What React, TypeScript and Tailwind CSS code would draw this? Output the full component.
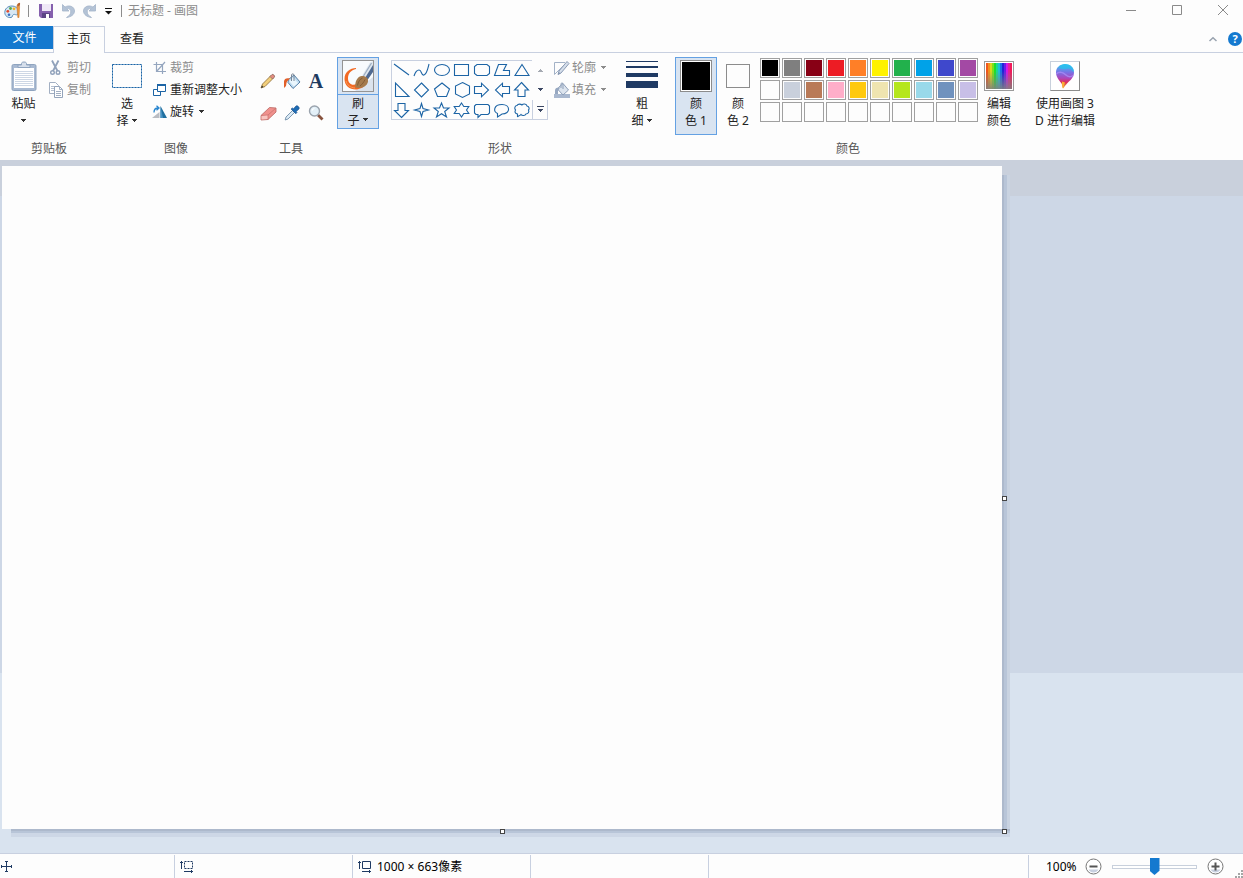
import React from 'react';
import clsx from 'clsx';

type IconProps = { children: React.ReactNode; w?: number; h?: number; className?: string };

function Icon({ children, w = 16, h = 16, className }: IconProps) {
  return (
    <svg
      width={w}
      height={h}
      viewBox={`0 0 ${w} ${h}`}
      fill="none"
      aria-hidden="true"
      className={clsx('shrink-0', className)}
    >
      {children}
    </svg>
  );
}

function Caret({ className = 'text-[#333]' }: { className?: string }) {
  return (
    <Icon w={7} h={4} className={className}>
      <path d="M1 0h5v1H5v1H4v1H3V2H2V1H1z" fill="currentColor" />
    </Icon>
  );
}

function PaletteIcon() {
  return (
    <Icon w={18} h={18}>
      <path d="M8 4C3.500 4 .8 7 .8 10.500.8 14 4 16 7 15.500c2-.3 1-2.300 2.500-3 1.500-.6 2.500 1 4 0 1.500-1 1.500-8.500-5.500-8.500z" fill="#d7e8f5" stroke="#5b8fb9" />
      <circle cx="3.800" cy="9.300" r="1.400" fill="#e04a2f" />
      <circle cx="6.500" cy="6.500" r="1.400" fill="#58a846" />
      <circle cx="10" cy="6.800" r="1.400" fill="#f0b429" />
      <circle cx="5" cy="12.800" r="1.300" fill="#3a6fc4" />
      <path d="M12.800 3.500C13 2 14.500 1 16 .8c.2 1.500 0 3-.8 3.900z" fill="#b5622c" />
      <path d="M12.800 3.800l2.800.8L15 15.500h-1.200z" fill="#f19a3c" stroke="#c0702c" strokeWidth=".5" />
    </Icon>
  );
}

function SaveIcon() {
  return (
    <Icon>
      <path d="M1 1h14v14H3l-2-2z" fill="#8560ad" />
      <path d="M4 1h9v7H4z" fill="#efe8f6" />
      <path d="M4 10h8v5H4z" fill="#5c4585" />
      <path d="M8 11h3v4H8z" fill="#fff" />
    </Icon>
  );
}

function UndoIcon({ flip = false }: { flip?: boolean }) {
  return (
    <Icon className={clsx(flip && '-scale-x-100')}>
      <path d="M2.500 1.500v6.500H9L6.800 5.800C9 5 11 6.500 10.800 9c-.1 2-1.600 4-4.300 5.500C11 14 14.500 11.500 14.500 8 14.500 3.500 9 1.500 5 4.100z" fill="#b4c3d6" stroke="#a3b4c9" strokeWidth=".8" />
    </Icon>
  );
}

function ClipboardIcon() {
  return (
    <Icon w={26} h={31}>
      <rect x="1" y="3.500" width="24" height="26" rx="1.500" fill="#a9bad2" stroke="#8fa4bf" />
      <path d="M3 7h20v20H3z" fill="#fff" />
      <path d="M4 10.500h18M4 12.500h18M4 14.500h18M4 16.500h18M4 18.500h18M4 20.500h18M4 22.500h18M4 24.500h18" stroke="#cdd7e5" />
      <path d="M7 6.500V4h3.500V2.500c0-1 1-1.500 2.500-1.500s2.500.5 2.500 1.500V4H19v2.500z" fill="#d6dfeb" stroke="#8fa4bf" />
    </Icon>
  );
}

function CutIcon() {
  return (
    <Icon>
      <path d="M3 0.500L8.500 11M9.500 .5L4 11" stroke="#91a2bb" strokeWidth="1.800" />
      <circle cx="3.500" cy="12.500" r="1.800" stroke="#91a2bb" strokeWidth="1.400" />
      <circle cx="9" cy="12.500" r="1.800" stroke="#91a2bb" strokeWidth="1.400" />
    </Icon>
  );
}

function CopyIcon() {
  return (
    <Icon>
      <path d="M.5.5h6l3 3v8h-9z" fill="#fff" stroke="#a2afc2" />
      <path d="M2 4.500h4M2 6.500h4M2 8.500h4" stroke="#b5c0d0" />
      <path d="M5.500 4.500h5l3 3v8h-8z" fill="#fff" stroke="#94a4bb" />
      <path d="M10.500 4.500v3h3M7 9.500h5M7 11.500h5M7 13.500h5" stroke="#a2afc2" />
    </Icon>
  );
}

function CropIcon() {
  return (
    <Icon>
      <path d="M4.500 2v9.500H14M1.500 4.500h9V14M5 11l8-9" stroke="#95a6bf" strokeWidth="1.200" />
    </Icon>
  );
}

function ResizeIcon() {
  return (
    <Icon>
      <path d="M1.500 7.500h7v6h-7z" fill="#fff" stroke="#1c64a5" />
      <path d="M5.500 2.500h8v7h-8z" fill="#fff" stroke="#1c64a5" />
      <path d="M5 3h9" stroke="#1c64a5" strokeWidth="2" />
    </Icon>
  );
}

function RotateIcon() {
  return (
    <Icon>
      <path d="M0 14L7.500 8v6z" fill="#b9bcc2" />
      <path d="M8.500 14V2L15 14z" fill="#1f6f9f" />
      <path d="M8.500 14V2l2.500 12z" fill="#4a94c4" />
      <path d="M2 8.500C2 5.500 3.500 4 6 4M4.500 1.800L7 4 4.500 6.200" stroke="#2986cf" strokeWidth="1.300" />
    </Icon>
  );
}

function PencilIcon() {
  return (
    <Icon>
      <path d="M1 15l1.500-4L11 2.500 13.500 5 5 13.500z" fill="#f2cf7b" stroke="#8a6a32" strokeWidth=".8" />
      <path d="M10 3.500l2-2c1-.8 3.200 1.400 2.500 2.500l-2 2z" fill="#e58b82" stroke="#8b6b60" strokeWidth=".8" />
      <path d="M1 15l1-2.500L3.500 14z" fill="#333" />
    </Icon>
  );
}

function BucketIcon() {
  return (
    <Icon w={18} h={17}>
      <path d="M5.500 6.500L11 2l6 7-7 6.500-5-6z" fill="#bfdcf1" stroke="#557fa5" />
      <path d="M10 4.500l5 5.500-4 3.500-4.500-5z" fill="#eaf6fd" />
      <path d="M8.500 8V2c0-1.500 2.500-1.500 2.500 0v6" stroke="#7b8796" />
      <path d="M1 15V8.500C1 5.500 4 4.500 7 5.500L4.500 8c-1.300 1-1 3-1.500 5z" fill="#e2602a" />
    </Icon>
  );
}

function EraserIcon() {
  return (
    <Icon w={17} h={15}>
      <path d="M1 9.500L9.500 1.500l6.500.5v4L8 13.500 1 14z" fill="#f0918d" stroke="#b96460" strokeWidth=".8" />
      <path d="M1 9.500l7-.5L16 2M8 9v4.500" stroke="#c8726e" strokeWidth=".8" />
      <path d="M1.500 10l6-.4v3.500l-6 .4z" fill="#f8c5c0" />
    </Icon>
  );
}

function DropperIcon() {
  return (
    <Icon>
      <path d="M1.200 15l.8-3L8.500 5.500l2 2L4 14z" fill="#dbeaf5" stroke="#7290aa" strokeWidth=".9" />
      <path d="M7 4l1.500-1 1 .8L12 1c1.500-1 4 1.500 3 3l-2.800 2.500.8 1-1.200 1.300z" fill="#1f6db5" stroke="#184c85" strokeWidth=".6" />
    </Icon>
  );
}

function MagnifierIcon() {
  return (
    <Icon>
      <path d="M10 10l4.500 4.500" stroke="#87523d" strokeWidth="2.800" />
      <circle cx="6.500" cy="6" r="5" fill="#e3f0f8" stroke="#9aa3ad" strokeWidth="1.400" />
      <path d="M4 5.500c.4-1.300 1.300-1.900 2.500-2" stroke="#fff" strokeWidth="1.200" />
    </Icon>
  );
}

function BrushIcon() {
  return (
    <Icon w={30} h={30}>
      <path d="M0 0h30v30H0z" fill="#f8fbfd" />
      <path d="M12 30h18V16z" fill="#dbe3ed" />
      {/* paint stroke */}
      <path d="M13 7C7 7 1.500 11 1.500 18 1.500 25 7 29 14 28.500l6-2-6-4c-4 3-9 .5-9-5C5 12.500 8 9 13 8z" fill="#f26a24" />
      <path d="M3 20c1 4 4 6.500 9 7" stroke="#f99a5c" />
      {/* handle and bristles */}
      <path d="M18.500 15.500L27 1.500 30 0v9l-6 9z" fill="#dfe7ef" />
      <path d="M22 17L30 4v7l-5.500 8z" fill="#4f6a92" />
      <path d="M20.500 15L28.500 2" stroke="#9aabc0" strokeWidth="1.200" />
      <path d="M12.500 26.500c-1-4.500 1-10.500 6-11.500 4-.5 7 2 6.500 5.500-1 5-6.500 7.500-12.500 6z" fill="#a47a4c" />
      <path d="M14.500 24.500c.5-3.500 2.500-6.500 5-7.500M17 25c2-1.500 4-4 5-6.500" stroke="#7b5630" strokeWidth=".8" />
    </Icon>
  );
}

function OutlineIcon() {
  return (
    <Icon>
      <path d="M11 2.500H.5v12L10 5" stroke="#a3b2c7" />
      <path d="M4 14.500l1-3.500 8-9.500 2 2L7 13z" fill="#d5deea" stroke="#8a9bb5" />
      <path d="M4 14.500l.8-2.500L6.500 13.500z" fill="#7f92ae" />
    </Icon>
  );
}

function FillIcon() {
  return (
    <Icon>
      <path d="M0 12h16v4H0z" fill="#a9b8cf" />
      <path d="M4.500 5.500L9 1.500l5.500 6.500L9 13 3.500 7z" fill="#dce4ee" stroke="#8fa0b9" />
      <path d="M7 6V2c0-1.500 2-1.500 2 0v5" stroke="#8fa0b9" />
      <path d="M1 12V8.500C1 6 3 5 6 5.500L4 9v3z" fill="#97a8c1" />
    </Icon>
  );
}

function Paint3DIcon() {
  return (
    <Icon w={28} h={28}>
      <defs>
        <linearGradient id="drop" x1="0" y1="0" x2="0" y2="1">
          <stop offset="0" stopColor="#3cc4f0" />
          <stop offset=".35" stopColor="#7a70e4" />
          <stop offset=".58" stopColor="#b045b8" />
          <stop offset=".75" stopColor="#dd2f5c" />
          <stop offset="1" stopColor="#f9b233" />
        </linearGradient>
      </defs>
      <path d="M14 2c5 0 9 3.500 9 8.500 0 5-4 8-6.500 10.500-1.800 1.800-3 4-4.500 5.500-.8-1.500-.5-3.500-1.500-5C9 19 5 15.500 5 10.500 5 5.500 9 2 14 2z" fill="url(#drop)" />
      <path d="M14 2c5 0 9 3.500 9 8-2-.5-2.500-3-5-3.500S14 8 11 7c-1.500-.5-2.500-1-3.500-.5C9 3.500 11.500 2 14 2z" fill="#22c3ee" opacity=".7" />
      <path d="M5.300 12c3-3 7-1.500 9 .5s5 3 8 1" stroke="#a98cf5" strokeWidth="1.500" opacity=".8" />
      <path d="M11 19.500l3 1-2 6c-.8-1.500-.5-3-1-4z" fill="#f9b233" />
    </Icon>
  );
}

const spectrum = ['#f0561c', '#f2901c', '#d8d81c', '#7be01c', '#1ce02c', '#1cd890', '#1cc0d8', '#1c70e8', '#2222d8', '#6a1ce8', '#d018e8', '#e81c9a', '#f01a5a'];

function SpectrumIcon() {
  return (
    <Icon w={26} h={26}>
      <defs>
        <linearGradient id="fade" x1="0" y1="0" x2="0" y2="1">
          <stop offset=".3" stopColor="#808080" stopOpacity="0" />
          <stop offset="1" stopColor="#808080" stopOpacity=".9" />
        </linearGradient>
      </defs>
      {spectrum.map((color, i) => (
        <rect key={color} x={i * 2} y="0" width="2" height="26" fill={color} />
      ))}
      <path d="M0 0h26v26H0z" fill="url(#fade)" />
    </Icon>
  );
}

const shapes: { name: string; d: string }[] = [
  { name: '直线', d: 'M2 4l15 11' },
  { name: '曲线', d: 'M2 16c1-3 3-6 5-6 3 0 2 6 5 5 3-1 4-7 5-11' },
  { name: '椭圆形', d: 'M2.500 10a7.500 5.500 0 1 0 15 0a7.500 5.500 0 1 0-15 0z' },
  { name: '矩形', d: 'M2.500 4.500h14v11h-14z' },
  { name: '圆角矩形', d: 'M5 4.500h10l2.500 2v7l-2.500 2H5l-2.500-2v-7z' },
  { name: '多边形', d: 'M6.500 4.500h8l-3 6h6v5h-15z' },
  { name: '三角形', d: 'M10 4.500l7 11H3z' },
  { name: '直角三角形', d: 'M3.500 3v13.500H17z' },
  { name: '菱形', d: 'M9.500 3l7 7-7 7-7-7z' },
  { name: '五边形', d: 'M10 3l7.500 6-3 7.500h-9L2.500 9z' },
  { name: '六边形', d: 'M10.500 2.500l7 3.500v8l-7 3.500-7-3.500V6z' },
  { name: '右箭头', d: 'M2.500 6.500h7V3.200l7 6.800-7 6.800v-3.300h-7z' },
  { name: '左箭头', d: 'M17.500 6.500h-7V3.200L3.500 10l7 6.800v-3.300h7z' },
  { name: '上箭头', d: 'M9.500 2.500L16.500 10H13v6.500H6V10H2.500z' },
  { name: '下箭头', d: 'M9.500 17.500l7-7h-3.500v-7H6v7H2.500z' },
  { name: '四角星形', d: 'M9.500 3.500l1.500 5 5.500 1.500-5.500 1.500-1.500 5-1.500-5L2.500 10 8 8.500z' },
  { name: '五角星形', d: 'M9.500 3l2 5h5.500l-4.300 3.500 1.800 5.500-5-3.300-5 3.300 1.800-5.500L2 8h5.500z' },
  { name: '六角星形', d: 'M9.500 3l2.300 3.500h5L14.500 10l2.300 3.500h-5L9.500 17l-2.300-3.500h-5L4.500 10 2.200 6.500h5z' },
  { name: '圆角矩形标注', d: 'M4 4.500h12l1.500 1.500v7l-1.500 1.500H9L6 17.500v-3H4l-1.500-1.500V6z' },
  { name: '椭圆形标注', d: 'M5.500 13.500C1 11.500 1.500 4.500 10 4.500s9 9.500 0 9.500L5.500 17z' },
  { name: '云形标注', d: 'M5 5.500c1-2 4-1.500 5-.5 1-1.500 4.500-1.500 5 1 2.500.5 2.500 3 1.500 4 1 2-.5 4-2.500 4-1 2-4 2-5 .5-1 1.500-3 1-3.500 2.500V14c-2.500 0-3-2.500-2-4C2 8.500 3 5.500 5 5.500z' },
];

const palette: (string | null)[] = [
  '#000000', '#7f7f7f', '#880015', '#ed1c24', '#ff7f27', '#fff200', '#22b14c', '#00a2e8', '#3f48cc', '#a349a4',
  '#fdfdfd', '#c9d0dc', '#b97a57', '#ffaec9', '#ffc90e', '#efe4b0', '#b5e61d', '#99d9ea', '#7092be', '#c8bfe7',
  null, null, null, null, null, null, null, null, null, null,
];

function Group({ label, className, children }: { label: string; className?: string; children: React.ReactNode }) {
  return (
    <section className={clsx('flex flex-col', className)} aria-label={label}>
      <div className="flex h-20 items-start">{children}</div>
      <h2 className="text-center leading-6 text-[#555]">{label}</h2>
    </section>
  );
}

type BigButtonProps = { icon: React.ReactNode; line1: string; line2?: string; caret?: boolean; className?: string };

function BigButton({ icon, line1, line2, caret, className = 'w-[42px]' }: BigButtonProps) {
  return (
    <button type="button" className={clsx('flex shrink-0 flex-col items-center leading-[17px]', className)}>
      <span className="flex h-[38px] items-center justify-center">{icon}</span>
      <span className="whitespace-nowrap">{line1}</span>
      <span className="flex h-[17px] items-center gap-0.5 whitespace-nowrap">
        {line2}
        {caret && <Caret />}
      </span>
    </button>
  );
}

type SmallButtonProps = { icon: React.ReactNode; label: string; caret?: boolean; disabled?: boolean };

function SmallButton({ icon, label, caret, disabled }: SmallButtonProps) {
  return (
    <button
      type="button"
      disabled={disabled}
      className={clsx('flex h-[22px] items-center gap-0.5 whitespace-nowrap', disabled && 'text-[#8c8c8c]')}
    >
      {icon}
      {label}
      {caret && <Caret className={clsx('ml-0.5', disabled ? 'text-[#8c8c8c]' : 'text-[#333]')} />}
    </button>
  );
}

function TitleBar() {
  return (
    <header className="flex h-[26px] items-start justify-between">
      <div className="flex h-[22px] items-center pl-1">
        <PaletteIcon />
        <span className="ml-1.5 h-3 w-px bg-[#8c8c8c]" />
        <button type="button" aria-label="保存" className="ml-[9px]"><SaveIcon /></button>
        <button type="button" aria-label="撤消" className="ml-1.5"><UndoIcon /></button>
        <button type="button" aria-label="重做" className="ml-1.5"><UndoIcon flip /></button>
        <button type="button" aria-label="自定义快速访问工具栏" className="ml-1.5">
          <Icon w={9} h={8}>
            <path d="M1 1.500h7" stroke="#111" />
            <path d="M1 4h7L4.500 7.500z" fill="#111" />
          </Icon>
        </button>
        <span className="ml-2 h-3 w-px bg-[#8c8c8c]" />
        <h1 className="ml-1.5 text-[#8c8c8c]">无标题 - 画图</h1>
      </div>
      <div className="flex h-[21px] items-center gap-[34px] pr-[14px] text-[#8a8a8a]">
        <button type="button" aria-label="最小化">
          <Icon w={12} h={12}><path d="M1 5.500h10" stroke="currentColor" /></Icon>
        </button>
        <button type="button" aria-label="最大化">
          <Icon w={12} h={12}><path d="M1.500.5h9v9h-9z" stroke="currentColor" /></Icon>
        </button>
        <button type="button" aria-label="关闭">
          <Icon w={12} h={12}><path d="M1 0l10 10M11 0L1 10" stroke="currentColor" /></Icon>
        </button>
      </div>
    </header>
  );
}

function TabBar() {
  return (
    <nav className="flex h-[27px] items-start border-b border-[#c8d0e0] pr-px">
      <button type="button" className="h-[23px] w-[53px] bg-[#1479cf] pr-1 leading-[23px] text-white">文件</button>
      <button type="button" className="h-[27px] w-[52px] border-x border-t border-[#c8d0e0] bg-[#fdfdfd] pb-0.5">主页</button>
      <button type="button" className="h-[25px] w-[54px]">查看</button>
      <div className="ml-auto flex h-[26px] items-center gap-[10px]">
        <button type="button" aria-label="最小化功能区">
          <Icon w={10} h={6}><path d="M1.500 5L5 1.800 8.500 5" stroke="#98a2ae" strokeWidth="1.500" /></Icon>
        </button>
        <button type="button" aria-label="帮助" className="size-[14px] rounded-full bg-[#1479cf] text-[11px] leading-[14px] font-bold text-white">?</button>
      </div>
    </nav>
  );
}

function ShapeGallery() {
  return (
    <div className="mt-[3px] flex">
      <div className="grid grid-cols-7 border-y border-l border-[#c8d0e0]">
        {shapes.map((shape, i) => (
          <button key={shape.name} type="button" aria-label={shape.name} className={clsx('w-5', i < 7 || i > 13 ? 'h-[19px]' : 'h-5')}>
            <Icon w={20} h={20} className={clsx(i < 7 && '-mt-px')}>
              <path d={shape.d} stroke="#1c64a5" strokeWidth="1.100" />
            </Icon>
          </button>
        ))}
      </div>
      <div className="flex w-4 flex-col">
        <button type="button" aria-label="上一行" className="flex h-5 items-center justify-center">
          <Caret className="rotate-180 text-[#a5aab2]" />
        </button>
        <button type="button" aria-label="下一行" className="flex h-5 items-center justify-center">
          <Caret className="text-[#3b4763]" />
        </button>
        <button type="button" aria-label="更多形状" className="flex h-5 flex-col items-center justify-center gap-0.5 border-x border-b border-[#c8d0e0]">
          <span className="h-px w-[7px] bg-[#3b4763]" />
          <Caret className="text-[#3b4763]" />
        </button>
      </div>
    </div>
  );
}

function Ribbon() {
  return (
    <div className="flex h-[107px] items-start pt-1">
      <Group label="剪贴板" className="w-[98px]">
        <BigButton icon={<ClipboardIcon />} line1="粘贴" caret className="w-[47px]" />
        <div className="ml-0.5">
          <SmallButton icon={<CutIcon />} label="剪切" disabled />
          <SmallButton icon={<CopyIcon />} label="复制" disabled />
        </div>
      </Group>
      <Group label="图像" className="ml-1.5 w-36">
        <BigButton
          className="w-[46px]"
          icon={
            <Icon w={32} h={26}>
              <path d="M1.500 1.500h29v23h-29z" stroke="#b9d3ea" />
              <path d="M1.500 1.500h29v23h-29z" stroke="#1c64a5" strokeDasharray="2 1" />
            </Icon>
          }
          line1="选"
          line2="择"
          caret
        />
        <div className="ml-0.5">
          <SmallButton icon={<CropIcon />} label="裁剪" disabled />
          <SmallButton icon={<ResizeIcon />} label="重新调整大小" />
          <SmallButton icon={<RotateIcon />} label="旋转" caret />
        </div>
      </Group>
      <Group label="工具" className="ml-1.5 w-[74px]">
        <div className="mt-2 ml-0.5 grid grid-cols-3">
          <button type="button" aria-label="铅笔" className="grid h-8 w-6 place-items-center"><PencilIcon /></button>
          <button type="button" aria-label="用颜色填充" className="grid h-8 w-6 place-items-center"><BucketIcon /></button>
          <button type="button" className="h-8 w-6 font-['Liberation_Serif',serif] text-[20px] leading-8 font-bold text-[#1f3a5f]">A</button>
          <button type="button" aria-label="橡皮擦" className="grid h-8 w-6 place-items-center"><EraserIcon /></button>
          <button type="button" aria-label="颜色选取器" className="grid h-8 w-6 place-items-center"><DropperIcon /></button>
          <button type="button" aria-label="放大镜" className="grid h-8 w-6 place-items-center"><MagnifierIcon /></button>
        </div>
      </Group>

      <div className="ml-[9px] flex w-[42px] flex-col border border-[#64a1e3] bg-[#d9e4f1]">
        <button type="button" aria-label="当前刷子" className="flex h-[37px] items-center justify-center border-b border-[#64a1e3]">
          <span className="border border-[#949494]"><BrushIcon /></span>
        </button>
        <button type="button" className="flex flex-col items-center leading-[17px]">
          <span>刷</span>
          <span className="flex h-4 items-center gap-0.5">子<Caret /></span>
        </button>
      </div>

      <Group label="形状" className="ml-3 w-[218px]">
        <ShapeGallery />
        <div className="ml-1.5">
          <SmallButton icon={<OutlineIcon />} label="轮廓" caret disabled />
          <SmallButton icon={<FillIcon />} label="填充" caret disabled />
        </div>
      </Group>

      <div className="ml-3">
        <BigButton
          icon={
            <Icon w={32} h={32}>
              <path d="M0 1h32v1H0zM0 6h32v2H0zM0 13h32v4H0zM0 21h32v7H0z" fill="#1f3a63" />
            </Icon>
          }
          line1="粗"
          line2="细"
          caret
        />
      </div>

      <Group label="颜色" className="ml-3 w-[346px]">
        <BigButton
          className="h-[78px] w-[42px] bg-[#d9e4f1] outline-1 -outline-offset-1 outline-[#64a1e3]"
          icon={<span className="size-8 border border-[#8c8c8c] bg-black outline-1 -outline-offset-2 outline-white" />}
          line1="颜"
          line2="色 1"
        />
        <BigButton
          icon={<span className="size-6 border border-[#8c8c8c] bg-[#fdfdfd]" />}
          line1="颜"
          line2="色 2"
        />
        <div className="mt-px ml-px grid grid-cols-10 gap-0.5">
          {palette.map((color, i) => (
            <button
              key={i}
              type="button"
              aria-label={color ?? '空'}
              className="size-5 border border-[#a0a0a0] p-px"
            >
              {color && <span className="block size-full" style={{ backgroundColor: color }} />}
            </button>
          ))}
        </div>
        <BigButton
          className="w-[42px]"
          icon={<span className="border border-[#9a9a9a] bg-white p-px"><SpectrumIcon /></span>}
          line1="编辑"
          line2="颜色"
        />
      </Group>

      <div className="ml-3">
        <BigButton
          className="w-16"
          icon={<span className="border border-t-[#c8d0dc] border-r-[#8c8c8c] border-b-[#8c8c8c] border-l-[#c8d0dc] bg-white"><Paint3DIcon /></span>}
          line1="使用画图 3"
          line2="D 进行编辑"
        />
      </div>
    </div>
  );
}

function Workspace() {
  return (
    <main className="flex-1 bg-[linear-gradient(#c9d0dc_36px,#cdd7e6_36px,#cdd7e6_513px,#d9e3ef_513px)] pb-4 pl-0.5">
      <div className="relative w-[1008px] pt-1.5">
        <div className="flex">
          {/* the drawing surface is 1000 x 663 document pixels */}
          <div className="h-[663px] w-[1000px] bg-[#fdfdfd]" />
          <div className="mt-[9px] w-0.5 bg-[#adb9cc]" />
          <div className="mt-[9px] w-[3px] bg-[#b8c5d8]" />
          <div className="mt-[9px] w-[3px] bg-[#c9d3e1]" />
        </div>
        <div className="ml-[9px] h-0.5 bg-[#adb9cc]" />
        <div className="ml-[9px] h-0.5 bg-[#b8c5d8]" />
        <div className="ml-[9px] h-1 bg-[#cdd7e6]" />
        <span className="absolute top-[336px] left-[1000px] size-[5px] border border-[#444] bg-white" />
        <span className="absolute top-[669px] left-[498px] size-[5px] border border-[#444] bg-white" />
        <span className="absolute top-[669px] left-[1000px] size-[5px] border border-[#444] bg-white" />
      </div>
    </main>
  );
}

function ZoomButton({ label, plus }: { label: string; plus?: boolean }) {
  return (
    <button type="button" aria-label={label}>
      <Icon w={17} h={17}>
        <circle cx="8.500" cy="8.500" r="7.500" fill="#fff" stroke="#777" />
        <path d="M3.500 11.500h10c-1 2-3 3-5 3s-4-1-5-3z" fill="#c8d0e0" />
        <path d={plus ? 'M4.500 8.500h8M8.500 4.500v8' : 'M4.500 8.500h8'} stroke="#555" strokeWidth="2" />
      </Icon>
    </button>
  );
}

function StatusBar() {
  return (
    <footer className="flex h-[25px] border-t border-[#c8d0e0] pt-px text-black">
      <div className="flex w-[175px] items-center border-r border-[#c8d0e0]">
        <Icon w={13} h={13}>
          <path d="M1 6.500h11M6.500 1v11M5 1.500h3M5 11.500h3M1.500 5v3M11.500 5v3" stroke="#1f3a63" />
        </Icon>
      </div>
      <div className="flex w-[178px] items-center border-r border-[#c8d0e0] pl-[5px]">
        <Icon w={14} h={13}>
          <path d="M1.500 1v8M0 2.500h3M4 11.500h9M11.500 10v3" stroke="#1f3a63" />
          <path d="M4.500 1.500h8v7h-8z" stroke="#1f3a63" strokeDasharray="2 1" />
        </Icon>
      </div>
      <div className="flex w-[178px] items-center gap-[5px] border-r border-[#c8d0e0] pl-[5px]">
        <Icon w={14} h={13}>
          <path d="M1.500 1v8M0 2.500h3M4 11.500h9M11.500 10v3M4.500 1.500h8v7h-8z" stroke="#1f3a63" />
        </Icon>
        <span>1000 × 663像素</span>
      </div>
      <div className="w-[178px] border-r border-[#c8d0e0]" />
      <div className="ml-auto flex items-center border-l border-[#c8d0e0] pl-[17px]">
        <label htmlFor="zoom" className="w-[39px]">100%</label>
        <ZoomButton label="缩小" />
        <input
          id="zoom"
          type="range"
          defaultValue={50}
          className="mx-[10px] h-1 w-[85px] appearance-none border border-[#c8d0dc] bg-white [&::-webkit-slider-thumb]:h-[17px] [&::-webkit-slider-thumb]:w-[10px] [&::-webkit-slider-thumb]:appearance-none [&::-webkit-slider-thumb]:bg-[#1479cf] [&::-webkit-slider-thumb]:[clip-path:polygon(0_0,100%_0,100%_75%,50%_100%,0_75%)]"
        />
        <ZoomButton label="放大" plus />
        <Icon w={8} h={8} className="ml-[11px] self-end">
          <path d="M6 0h2v2H6zM3 3h2v2H3zM6 3h2v2H6zM0 6h2v2H0zM3 6h2v2H3zM6 6h2v2H6z" fill="#a5a5a5" />
        </Icon>
      </div>
    </footer>
  );
}

export default function App() {
  return (
    <div className="flex min-h-screen flex-col bg-[#fdfdfd] font-['Noto_Sans','Noto_Sans_CJK_SC',sans-serif] text-[12px] text-[#222]">
      <TitleBar />
      <TabBar />
      <Ribbon />
      <Workspace />
      <StatusBar />
    </div>
  );
}
